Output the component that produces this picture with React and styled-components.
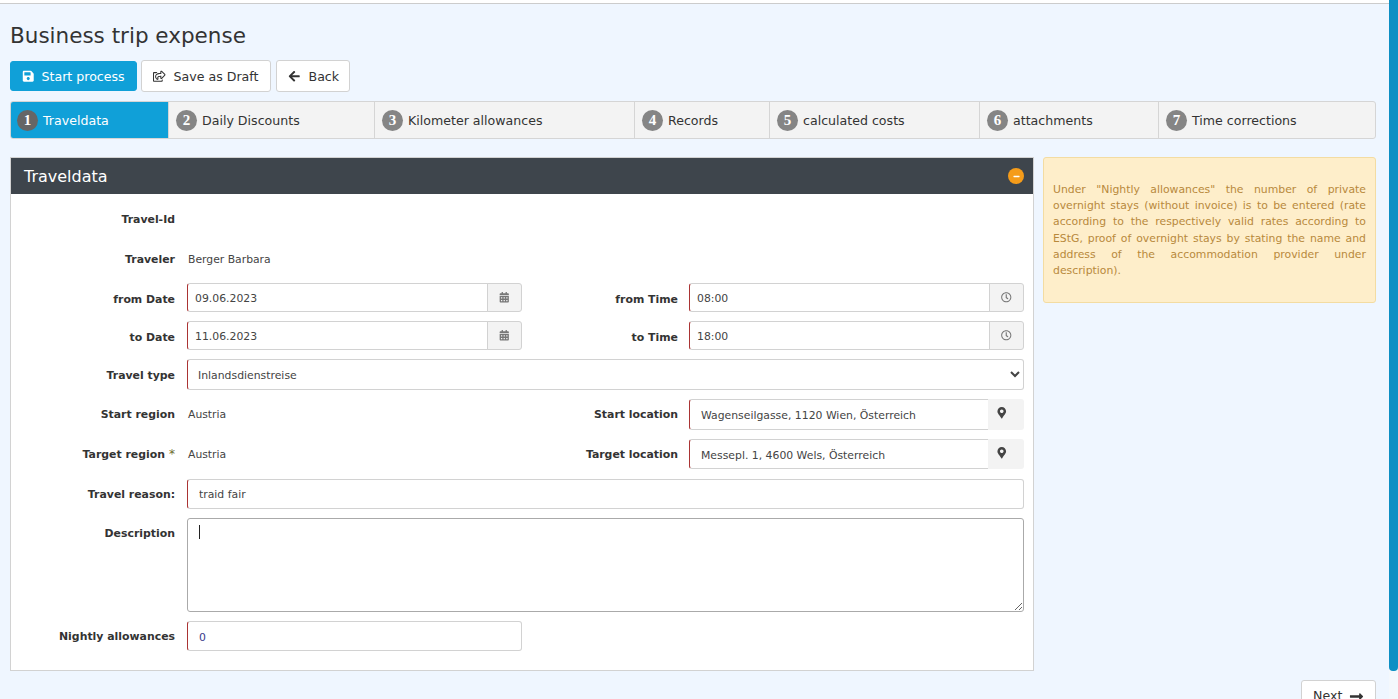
import React from "react";
import styled, { createGlobalStyle } from "styled-components";
import { FaSave, FaRegShareSquare, FaArrowLeft, FaCalendarAlt, FaRegClock, FaMapMarkerAlt, FaLongArrowAltRight, FaMinus } from "react-icons/fa";

const Global = createGlobalStyle`
  html, body { margin: 0; padding: 0; height: 699px; overflow: hidden; background: #eff6ff; }
  body { font-family: "DejaVu Sans", Verdana, sans-serif; color: #333; }
  * { box-sizing: border-box; }
`;

const Shell = styled.div`display: flex; width: 1398px; height: 699px; overflow: hidden;`;
const Main = styled.div`width: 1389px; flex: none; height: 699px; overflow: hidden;`;
const ScrollTrack = styled.div`width: 9px; flex: none; height: 699px; background: #f4f8fc;`;
const ScrollThumb = styled.div`height: 671px; background: #0d8fc4; border-radius: 0 0 4px 4px;`;
const TopStrip = styled.div`height: 4px; background: #fff; border-bottom: 1px solid #ccc;`;
const Page = styled.div`padding: 0 13px 0 10px;`;
const Title = styled.h1`margin: 18px 0 0; font-size: 21.5px; font-weight: 400; line-height: 27px; height: 27px; color: #333;`;
const Toolbar = styled.div`display: flex; align-items: center; gap: 4px; margin-top: 11px; height: 32px;`;
const Btn = styled.button`
  display: flex; align-items: center; gap: ${p => p.$primary ? 7 : 8}px; height: ${p => p.$primary ? 30 : 32}px; padding: 0 0 0 11px;
  width: ${p => p.$w}px; margin-left: ${p => p.$ml || 0}px; white-space: nowrap;
  font: 400 12.6px "DejaVu Sans", sans-serif; border-radius: 3px;
  background: ${p => p.$primary ? "#10a0d8" : "#fff"}; color: ${p => p.$primary ? "#fff" : "#333"};
  border: 1px solid ${p => p.$primary ? "#10a0d8" : "#d2d2d2"};
  svg { font-size: 12.5px; flex: none; }
`;
const Tabs = styled.div`display: flex; height: 38px; margin-top: 9px; border: 1px solid #d5d5d5; border-radius: 3px; background: #f3f3f3; overflow: hidden;`;
const Tab = styled.div`
  flex: none; width: ${p => p.$w}px; display: flex; align-items: center; gap: 5px; padding-left: ${p => p.$active ? 6 : 7}px; white-space: nowrap;
  font-size: 12.6px; color: ${p => p.$active ? "#fff" : "#333"}; background: ${p => p.$active ? "#10a0d8" : "transparent"};
  border-right: ${p => p.$last ? "0" : "1px solid #d5d5d5"};
`;
const Num = styled.span`
  width: 21px; height: 21px; border-radius: 50%; flex: none; display: flex; align-items: center; justify-content: center;
  font: 700 15px "Liberation Serif", serif; color: #fff; background: ${p => p.$active ? "#666" : "#858585"};
`;
const Columns = styled.div`display: flex; gap: 9px; align-items: flex-start; margin-top: 18px;`;
const Panel = styled.section`width: 1024px; flex: none; height: 514px; background: #fff; border: 1px solid #d2d2d2;`;
const PanelHead = styled.header`height: 36px; background: #3e454c; color: #fff; display: flex; align-items: center; justify-content: space-between; padding: 0 9px 0 13px; font-size: 16px;`;
const Collapse = styled.span`
  width: 16px; height: 16px; border-radius: 50%; background: #f59c1a; display: flex; align-items: center; justify-content: center; color: #fff; font-size: 7px;
`;
const Form = styled.div`display: flex; flex-direction: column; gap: 9px; padding: 10px 9px 0 0;`;
const Row = styled.div`display: flex; height: ${p => p.$h}px; align-items: flex-start;`;
const Label = styled.div`
  flex: none; width: ${p => p.$w || 164}px; text-align: right; font-size: 10.9px; font-weight: 700; color: #333; line-height: 14px;
  padding-top: ${p => p.$pt ?? 9}px; margin-right: ${p => p.$mr ?? 12}px; white-space: nowrap;
  em { font-style: normal; font-weight: 400; font-size: 12px; color: #6b6b2e; margin-left: 4px; }
`;
const Value = styled.div`font-size: 10.8px; line-height: 14px; padding: 9px 0 0 1px; color: #444; width: ${p => p.$w || "auto"};`;
const Group = styled.div`display: flex; width: ${p => p.$w}px; height: ${p => p.$h || 29}px;`;
const Input = styled.input`
  flex: 1; min-width: 0; height: ${p => p.$h || 29}px; border: 1px solid #d2d2d2; border-left: 1px solid #a33; border-radius: 3px 0 0 3px;
  padding: ${p => p.$pt ?? 2}px 0 0 ${p => p.$pl || 7}px; font: 400 10.85px "DejaVu Sans", sans-serif; color: ${p => p.$c || "#444"}; outline: 0; background: #fff;
  border-top-right-radius: ${p => p.$full ? 3 : 0}px; border-bottom-right-radius: ${p => p.$full ? 3 : 0}px;
`;
const Addon = styled.span`
  flex: none; width: ${p => p.$w || 35}px; display: flex; align-items: ${p => p.$top ? "flex-start" : "center"}; justify-content: center;
  padding: ${p => p.$top ? "8px 8px 0 0" : "0"};
  background: #f3f3f3; color: ${p => p.$c || "#777"}; font-size: ${p => p.$top ? 11.5 : 10.5}px;
  border: ${p => p.$plain ? "0" : "1px solid #d2d2d2"}; border-left: ${p => p.$plain ? "0" : "1px solid #d2d2d2"}; border-radius: 0 3px 3px 0; margin-left: -1px;
`;
const Select = styled.select`
  width: 837px; height: 31px; border: 1px solid #d2d2d2; border-left: 1px solid #a33; border-radius: 3px; background: #fff; padding: 2px 0 0 6px;
  font: 400 10.85px "DejaVu Sans", sans-serif; color: #444; outline: 0;
`;
const TextArea = styled.textarea`
  width: 837px; height: 94px; border: 1px solid #aaa; border-radius: 3px; background: #fff; padding: 6px 10px; outline: 0; font: 400 11px "DejaVu Sans", sans-serif;
  display: block;
`;
const Caret = styled.span`position: absolute; left: 12px; top: 7px; width: 1px; height: 14px; background: #222;`;
const TextWrap = styled.div`position: relative; width: 837px; height: 94px;`;
const Alert = styled.aside`
  width: 333px; height: 146px; background: #feeeca; border: 1px solid #f3dca2; border-radius: 3px; padding: 24px 9px 0;
  font-size: 10.85px; line-height: 16.2px; color: #b8893c; text-align: justify;
`;
const Footer = styled.div`display: flex; justify-content: flex-end; margin-top: 9px;`;
const NextBtn = styled.button`
  width: 75px; height: 36px; display: flex; align-items: flex-start; padding: 7px 0 0 11px; gap: 7px; background: #fff; border: 1px solid #d2d2d2; border-radius: 3px;
  font: 400 12.6px "DejaVu Sans", sans-serif; color: #333; svg { font-size: 15px; margin-top: 1px; }
`;

const tabs = [
  ["Traveldata", 158, true], ["Daily Discounts", 206], ["Kilometer allowances", 260], ["Records", 135],
  ["calculated costs", 210], ["attachments", 179], ["Time corrections", 217],
];

export default function App() {
  return (
    <Shell>
      <Global />
      <Main>
        <TopStrip />
        <Page>
          <Title>Business trip expense</Title>
          <Toolbar>
            <Btn $primary $w={127}><FaSave />Start process</Btn>
            <Btn $w={130}><FaRegShareSquare />Save as Draft</Btn>
            <Btn $w={74} $ml={1}><FaArrowLeft />Back</Btn>
          </Toolbar>
          <Tabs>
            {tabs.map(([t, w, active], i) => (
              <Tab key={t} $w={w} $active={active} $last={i === 6}>
                <Num $active={active}>{i + 1}</Num>{t}
              </Tab>
            ))}
          </Tabs>
          <Columns>
            <Panel>
              <PanelHead>Traveldata<Collapse><FaMinus /></Collapse></PanelHead>
              <Form>
                <Row $h={31}><Label>Travel-Id</Label></Row>
                <Row $h={30}><Label>Traveler</Label><Value>Berger Barbara</Value></Row>
                <Row $h={29}>
                  <Label $pt={10}>from Date</Label>
                  <Group $w={335}><Input defaultValue="09.06.2023" /><Addon><FaCalendarAlt /></Addon></Group>
                  <Label $w={156} $mr={11} $pt={10}>from Time</Label>
                  <Group $w={335}><Input defaultValue="08:00" /><Addon><FaRegClock /></Addon></Group>
                </Row>
                <Row $h={29}>
                  <Label $pt={10}>to Date</Label>
                  <Group $w={335}><Input defaultValue="11.06.2023" /><Addon><FaCalendarAlt /></Addon></Group>
                  <Label $w={156} $mr={11} $pt={10}>to Time</Label>
                  <Group $w={335}><Input defaultValue="18:00" /><Addon><FaRegClock /></Addon></Group>
                </Row>
                <Row $h={31}>
                  <Label $pt={10}>Travel type</Label>
                  <Select defaultValue="Inlandsdienstreise"><option>Inlandsdienstreise</option></Select>
                </Row>
                <Row $h={31}>
                  <Label>Start region</Label><Value $w="335px">Austria</Value>
                  <Label $w={156} $mr={11}>Start location</Label>
                  <Group $w={335} $h={31}><Input $h={31} $pl={11} defaultValue="Wagenseilgasse, 1120 Wien, Österreich" /><Addon $w={36} $plain $top $c="#444"><FaMapMarkerAlt /></Addon></Group>
                </Row>
                <Row $h={31}>
                  <Label $pt={8}>Target region<em>*</em></Label><Value $w="335px">Austria</Value>
                  <Label $w={156} $mr={11}>Target location</Label>
                  <Group $w={335} $h={30}><Input $h={30} $pl={11} defaultValue="Messepl. 1, 4600 Wels, Österreich" /><Addon $w={36} $plain $top $c="#444"><FaMapMarkerAlt /></Addon></Group>
                </Row>
                <Row $h={30}>
                  <Label>Travel reason:</Label>
                  <Group $w={837} $h={30}><Input $h={30} $pt={0} $full $pl={11} defaultValue="traid fair" /></Group>
                </Row>
                <Row $h={94}>
                  <Label>Description</Label>
                  <TextWrap><TextArea /><Caret /></TextWrap>
                </Row>
                <Row $h={30}>
                  <Label>Nightly allowances</Label>
                  <Group $w={335} $h={30}><Input $h={30} $full $pl={11} $c="#3a3a8a" defaultValue="0" /></Group>
                </Row>
              </Form>
            </Panel>
            <Alert>Under "Nightly allowances" the number of private overnight stays (without invoice) is to be entered (rate according to the respectively valid rates according to EStG, proof of overnight stays by stating the name and address of the accommodation provider under description).</Alert>
          </Columns>
          <Footer><NextBtn>Next<FaLongArrowAltRight /></NextBtn></Footer>
        </Page>
      </Main>
      <ScrollTrack><ScrollThumb /></ScrollTrack>
    </Shell>
  );
}
